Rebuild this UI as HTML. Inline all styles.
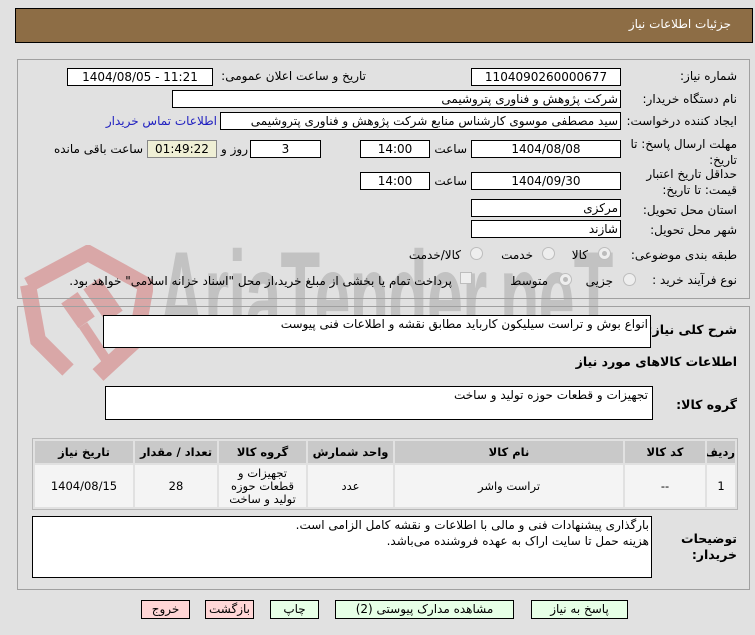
<!DOCTYPE html>
<html><head><meta charset="utf-8"><style>
*{margin:0;padding:0;box-sizing:border-box}
body{width:755px;height:635px;background:#e1e1e1;position:relative;overflow:hidden;font-family:"DejaVu Sans","Noto Sans CJK SC",sans-serif;font-size:12px;color:#000;direction:rtl}
.a{position:absolute;white-space:nowrap}
.in{position:absolute;background:#fff;border:1px solid #000;text-align:center;font-size:12px;line-height:16px}
.n{direction:ltr}
.l{position:absolute;white-space:nowrap;font-size:12px}
.b{font-weight:bold}
.rad{position:absolute;width:13px;height:13px;border-radius:50%;border:1px solid #bdbdbd;background:#eee}
.rad.c::after{content:"";position:absolute;left:3px;top:3px;width:5px;height:5px;border-radius:50%;background:#bbb}
.btn{position:absolute;top:600px;height:19px;border:1px solid #000;font-size:12px;text-align:center;line-height:17px}
table{border-collapse:separate;border-spacing:2px;table-layout:fixed}
td,th{font-size:11.5px;text-align:center;overflow:hidden}
</style></head><body>
<div class="a" style="left:15px;top:8px;width:738px;height:35px;background:#8d6d45;border:1px solid #000"></div>
<div class="a" style="right:24px;top:17px;color:#fff;font-size:12px">جزئیات اطلاعات نیاز</div>

<svg class="a" style="left:18px;top:245px" width="135" height="140" viewBox="0 0 135 140"><path d="M10 40 L70 8 L128 40 L118 95 L80 130" fill="none" stroke="#d9a7a7" stroke-width="16"/><path d="M10 40 L20 95 L50 125" fill="none" stroke="#d9a7a7" stroke-width="16"/><rect x="50" y="50" width="20" height="30" fill="#d9a7a7" transform="rotate(-35 60 65)"/><rect x="75" y="35" width="20" height="40" fill="#d9a7a7" transform="rotate(-35 85 55)"/><path d="M65 80 L95 125" stroke="#d9a7a7" stroke-width="10"/></svg>
<div class="a" style="left:158px;top:232px;font-family:'Liberation Sans',sans-serif;font-weight:bold;font-size:130px;line-height:130px;color:#c2c2c2;direction:ltr;letter-spacing:-2px;transform:scaleX(0.5);transform-origin:left top">AriaTender.neT</div>

<div class="a" style="left:17px;top:59px;width:733px;height:240px;border:1px solid #a0a0a0"></div>
<div class="a" style="left:17px;top:306px;width:733px;height:284px;border:1px solid #a0a0a0"></div>

<div class="l" style="right:18px;top:69px">شماره نیاز:</div>
<div class="in n" style="left:471px;top:68px;width:150px;height:18px">1104090260000677</div>
<div class="l" style="right:389px;top:69px">تاریخ و ساعت اعلان عمومی:</div>
<div class="in n" style="left:67px;top:68px;width:146px;height:18px">1404/08/05 - 11:21</div>

<div class="l" style="right:18px;top:92px">نام دستگاه خریدار:</div>
<div class="in" style="left:172px;top:90px;width:449px;height:18px;text-align:right;padding-right:2px">شرکت پژوهش و فناوری پتروشیمی</div>

<div class="l" style="right:18px;top:114px">ایجاد کننده درخواست:</div>
<div class="in" style="left:220px;top:112px;width:401px;height:18px;text-align:right;padding-right:2px">سید مصطفی موسوی کارشناس منابع شرکت پژوهش و فناوری پتروشیمی</div>
<div class="l" style="right:538px;top:114px;color:#2020c0">اطلاعات تماس خریدار</div>

<div class="l" style="right:18px;top:136px;line-height:16px">مهلت ارسال پاسخ: تا<br>تاریخ:</div>
<div class="in n" style="left:471px;top:140px;width:150px;height:18px">1404/08/08</div>
<div class="l" style="right:288px;top:142px">ساعت</div>
<div class="in n" style="left:360px;top:140px;width:70px;height:18px">14:00</div>
<div class="in n" style="left:250px;top:140px;width:71px;height:18px">3</div>
<div class="l" style="right:507px;top:142px">روز و</div>
<div class="in n" style="left:147px;top:140px;width:70px;height:18px;background:#efefd5;border-color:#888">01:49:22</div>
<div class="l" style="right:612px;top:142px">ساعت باقی مانده</div>

<div class="l" style="right:18px;top:166px;line-height:16px">حداقل تاریخ اعتبار<br>قیمت: تا تاریخ:</div>
<div class="in n" style="left:471px;top:172px;width:150px;height:18px">1404/09/30</div>
<div class="l" style="right:288px;top:174px">ساعت</div>
<div class="in n" style="left:360px;top:172px;width:70px;height:18px">14:00</div>

<div class="l" style="right:18px;top:203px">استان محل تحویل:</div>
<div class="in" style="left:471px;top:199px;width:150px;height:18px;text-align:right;padding-right:2px">مرکزی</div>
<div class="l" style="right:18px;top:223px">شهر محل تحویل:</div>
<div class="in" style="left:471px;top:220px;width:150px;height:18px;text-align:right;padding-right:2px">شازند</div>

<div class="l" style="right:18px;top:248px">طبقه بندی موضوعی:</div>
<div class="rad c" style="left:598px;top:247px"></div><div class="l" style="right:167px;top:248px">کالا</div>
<div class="rad" style="left:542px;top:247px"></div><div class="l" style="right:222px;top:248px">خدمت</div>
<div class="rad" style="left:470px;top:247px"></div><div class="l" style="right:294px;top:248px">کالا/خدمت</div>

<div class="l" style="right:18px;top:273px">نوع فرآیند خرید :</div>
<div class="rad" style="left:623px;top:273px"></div><div class="l" style="right:142px;top:274px">جزیی</div>
<div class="rad c" style="left:559px;top:273px"></div><div class="l" style="right:207px;top:274px">متوسط</div>
<div class="a" style="left:460px;top:272px;width:12px;height:12px;border:1px solid #bdbdbd;background:#eee"></div>
<div class="l" style="right:303px;top:274px">پرداخت تمام یا بخشی از مبلغ خرید،از محل "اسناد خزانه اسلامی" خواهد بود.</div>

<div class="l b" style="right:18px;top:322px;font-size:12.5px">شرح کلی نیاز:</div>
<div class="in" style="left:103px;top:315px;width:548px;height:33px;text-align:right;padding-right:2px;line-height:16px">انواع بوش و تراست سیلیکون کارباید مطابق نقشه و اطلاعات فنی پیوست</div>
<div class="l b" style="right:18px;top:354px;font-size:12.5px">اطلاعات کالاهای مورد نیاز</div>
<div class="l b" style="right:18px;top:397px;font-size:12.5px">گروه کالا:</div>
<div class="in" style="left:105px;top:386px;width:548px;height:34px;text-align:right;padding-right:4px;line-height:16px">تجهیزات و قطعات حوزه تولید و ساخت</div>

<div class="a" style="left:32px;top:438px;width:706px;height:72px;border:1px solid #b8b8b8;overflow:hidden">
<table style="width:704px;height:70px">
<colgroup><col style="width:28px"><col style="width:80px"><col style="width:228px"><col style="width:85px"><col style="width:87px"><col style="width:82px"><col style="width:98px"></colgroup>
<tr style="height:22px;background:#c9c9c9;font-weight:bold"><th>ردیف</th><th>کد کالا</th><th>نام کالا</th><th>واحد شمارش</th><th>گروه کالا</th><th>تعداد / مقدار</th><th>تاریخ نیاز</th></tr>
<tr style="background:#f4f4f4;line-height:13px"><td>1</td><td>--</td><td>تراست واشر</td><td>عدد</td><td style="white-space:normal">تجهیزات و قطعات حوزه تولید و ساخت</td><td>28</td><td>1404/08/15</td></tr>
</table></div>

<div class="l b" style="right:18px;top:531px;font-size:12.5px;line-height:16px">توضیحات<br>خریدار:</div>
<div class="in" style="left:32px;top:516px;width:620px;height:62px;text-align:right;padding-right:2px;line-height:16px">بارگذاری پیشنهادات فنی و مالی با اطلاعات و نقشه کامل الزامی است.<br>هزینه حمل تا سایت اراک به عهده فروشنده می‌باشد.</div>

<div class="btn" style="left:141px;width:49px;background:#ffd6d6">خروج</div>
<div class="btn" style="left:205px;width:49px;background:#ffd6d6">بازگشت</div>
<div class="btn" style="left:270px;width:49px;background:#e6ffe6">چاپ</div>
<div class="btn" style="left:335px;width:179px;background:#e6ffe6">مشاهده مدارک پیوستی (2)</div>
<div class="btn" style="left:531px;width:97px;background:#e6ffe6">پاسخ به نیاز</div>
</body></html>
